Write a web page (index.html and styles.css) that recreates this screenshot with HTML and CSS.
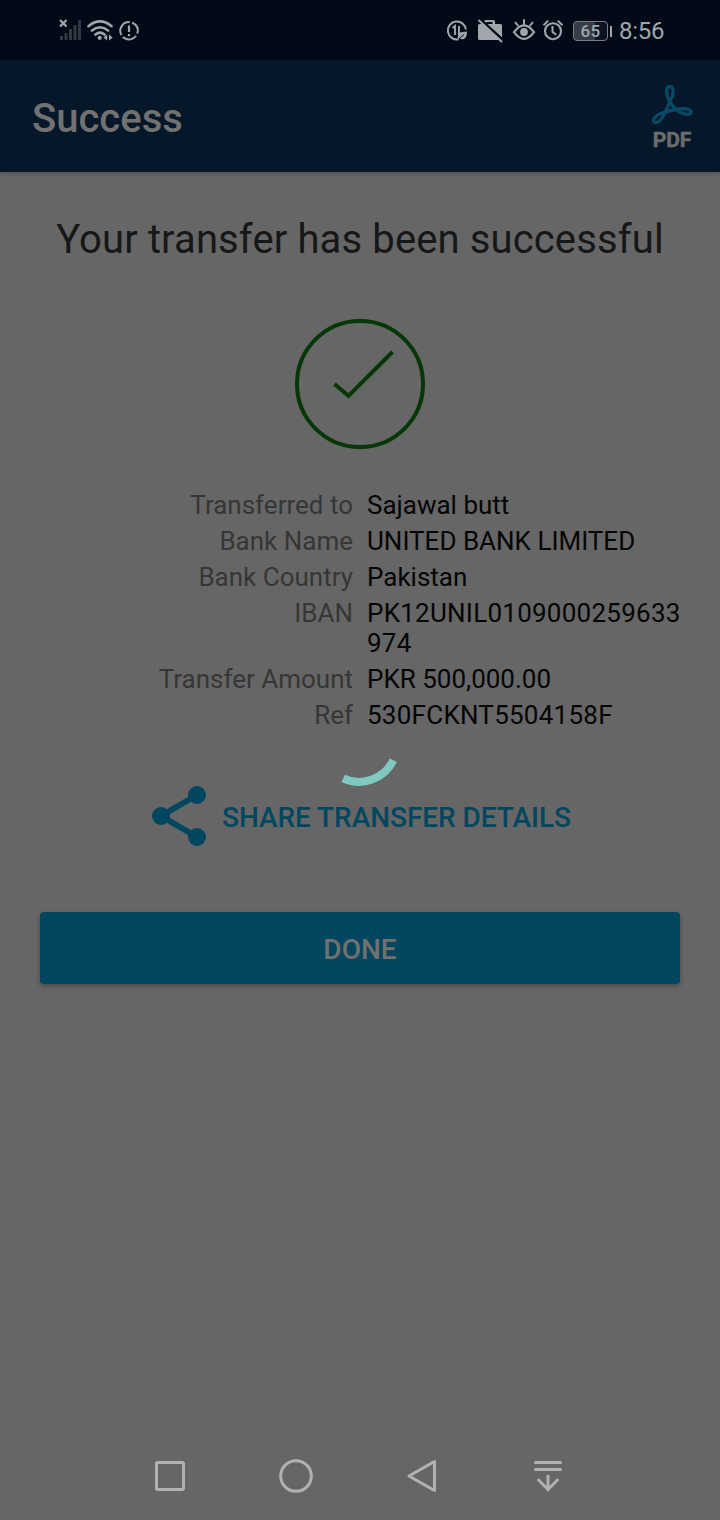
FILE: index.html
```html
<!DOCTYPE html>
<html lang="en">
<head>
<meta charset="utf-8">
<title>Success</title>
<link rel="stylesheet" href="styles.css">
</head>
<body>
<div class="status">
  <svg class="status-left" width="84" height="30" viewBox="56 16 84 30" fill="none" stroke="#a0a6ab">
    <path d="M60 20l6.500 6.500m0-6.500l-6.500 6.500" stroke-width="2.300"/>
    <path d="M61.500 36v4M66 33v7M70.500 29v11M75 25v15M79.500 20v20" stroke="#303943" stroke-width="3"/>
    <path d="M88.500 26.200q11.500-9.500 23 0M92 30.500q8-6.500 16 0M95.500 34.600q4.500-3.800 9 0" stroke-width="2.600" stroke-linecap="round"/>
    <circle cx="99.700" cy="37.800" r="2.100" fill="#a0a6ab" stroke="none"/>
    <path d="M103.500 37.500l3.700-3v6zM112.700 37.500l-3.700-3v6z" fill="#a0a6ab" stroke="none"/>
    <circle cx="129" cy="30.800" r="8.700" stroke-width="2" pathLength="360" stroke-dasharray="100 16 124 16 88 16" transform="rotate(35 129 30.800)"/>
    <path d="M129 25.500v6.500M129 34v2.200" stroke-width="2.200"/>
  </svg>
  <svg class="status-right" width="120" height="30" viewBox="446 16 120 30" fill="none" stroke="#a0a6ab">
    <path d="M465.800 29.500a9 9 0 1 0-7.300 9.800" stroke-width="2"/>
    <path d="M452.500 28l2.500-2v9M459 26v9l2.800-2.500" stroke-width="1.900"/>
    <path d="M458 39.800c-1-6 3-8 9-8.300c.3 6-3 9.500-8 7z" fill="#a0a6ab" stroke="none"/>
    <path d="M459 39l5-4.500" stroke="#020a17" stroke-width="1"/>
    <path d="M479.500 24H484v-2.500q0-1.500 1.500-1.500h8q1.500 0 1.500 1.500V24h5.500q1.500 0 1.500 1.500V40h-22.500q-1.500 0-1.500-1.500V25.500q0-1.500 1.500-1.500z" fill="#a0a6ab" stroke="none"/>
    <path d="M486.500 22h6v2h-6z" fill="#020a17" stroke="none"/>
    <path d="M480 19l24 22" stroke="#020a17" stroke-width="2.500"/>
    <path d="M478.500 20l23.500 22" stroke-width="2"/>
    <path d="M514 32.200q10-13.500 20 0q-10 13.500-20 0z" stroke-width="2.200"/>
    <circle cx="524" cy="32" r="3.900" fill="#a0a6ab" stroke="none"/>
    <path d="M524 20v4M515.500 22.500l2.300 3M532.500 22.500l-2.300 3" stroke-width="2" stroke-linecap="round"/>
    <circle cx="553" cy="31.200" r="8" stroke-width="2.100"/>
    <path d="M543.500 25.300l4.700-4.700M557.800 20.600l4.700 4.700M552.500 26v5.700l3.700 3" stroke-width="2"/>
  </svg>
  <div class="battery"><span>65</span></div>
  <div class="battery-tip"></div>
  <div class="time">8:56</div>
</div>
<header class="appbar">
  <h1>Success</h1>
  <div class="pdf">
    <svg width="42" height="42" viewBox="651 84 42 42" fill="none" stroke="#064a66" stroke-width="3.300" stroke-linejoin="round">
      <path d="M670 101C674.500 94 674 86.500 669.800 86.500C665.500 86.500 665.500 94 669.500 101C672 106 677 111 683 113.500C687 115 691 114.800 691 112C691 108.500 684 108 678 109C672 110 666 111.500 661 113.500C656 115.500 653 118.500 653.500 121C654 124 659 123 662 118C665 113 668 106 670 101Z"/>
    </svg>
    <span>PDF</span>
  </div>
</header>
<main class="content">
  <h2>Your transfer has been successful</h2>
  <svg class="check" width="130" height="130" viewBox="0 0 130 130" fill="none" stroke="#053806" stroke-width="4">
    <circle cx="65" cy="65" r="63"/>
    <path d="M39.500 65L53.500 76.800L97.500 33"/>
  </svg>
  <dl class="details">
    <dt>Transferred to</dt><dd>Sajawal butt</dd>
    <dt>Bank Name</dt><dd>UNITED BANK LIMITED</dd>
    <dt>Bank Country</dt><dd>Pakistan</dd>
    <dt>IBAN</dt><dd class="code">PK12UNIL0109000259633<br>974</dd>
    <dt>Transfer Amount</dt><dd>PKR 500,000.00</dd>
    <dt>Ref</dt><dd class="code">530FCKNT5504158F</dd>
  </dl>
  <div class="share">
    <svg width="54" height="60" viewBox="0 0 54 60" fill="#02465f">
      <path d="M45 9L9 30L45 51" fill="none" stroke="#02465f" stroke-width="6"/>
      <circle cx="45" cy="9" r="9"/><circle cx="9" cy="30" r="9"/><circle cx="45" cy="51" r="9"/>
    </svg>
    <span>SHARE TRANSFER DETAILS</span>
  </div>
  <button class="done">DONE</button>
</main>
<svg class="spinner" width="60" height="32" viewBox="340 756 60 32" fill="none" stroke="#7fc9c0" stroke-width="8">
  <path d="M343.200 778.300A38 38 0 0 0 393.300 760.300"/>
</svg>
<nav class="navbar">
  <svg width="32" height="36" viewBox="0 0 32 36"><rect x="2.500" y="4.500" width="27" height="27" rx="1.500"/></svg>
  <svg width="36" height="36" viewBox="0 0 36 36"><circle cx="18" cy="18" r="15.300"/></svg>
  <svg width="32" height="36" viewBox="0 0 32 36"><path d="M3 18L28.500 3.500v29z"/></svg>
  <svg width="30" height="36" viewBox="0 0 30 36"><path d="M2.500 4.500h25M2.500 11.500h25M15 18v14M5.500 22L15 31.500L24.500 22"/></svg>
</nav>
</body>
</html>
```
FILE: styles.css
```css
* { box-sizing: border-box; }
body {
  margin: 0;
  width: 720px;
  height: 1520px;
  display: flex;
  flex-direction: column;
  position: relative;
  overflow: hidden;
  background: #666;
  font-family: Roboto, "Liberation Sans", sans-serif;
}
svg { display: block; flex: none; }
.status {
  height: 60px;
  flex: none;
  display: flex;
  align-items: center;
  padding: 2px 0 0 56px;
  background: #020a17;
  color: #a0a6ab;
}
.status-right { margin-left: 306px; }
.battery {
  width: 35px;
  height: 20px;
  margin-left: 7px;
  border: 1.5px solid #777e85;
  border-radius: 4px;
  background: linear-gradient(90deg, #353c47 65%, #0b1420 65%);
  font-size: 17px;
  font-weight: 500;
  line-height: 18px;
  letter-spacing: .3px;
  text-align: center;
}
.battery-tip { width: 2px; height: 11px; margin-left: 2px; background: #a0a6ab; }
.time { margin-left: 7px; font-size: 24px; line-height: 28px; letter-spacing: -.3px; white-space: nowrap; }
.appbar {
  height: 112px;
  flex: none;
  display: flex;
  justify-content: space-between;
  padding: 24px 27px 0 32px;
  background: #061729;
  box-shadow: 0 1px 5px rgba(0, 0, 0, .25);
}
h1 { margin: 11px 0 0; font-size: 40px; line-height: 47px; font-weight: 500; color: #717171; }
.pdf { display: flex; flex-direction: column; align-items: center; color: #6c6c6c; }
.pdf span { margin-top: 2px; font-size: 21px; line-height: 24px; font-weight: 700; -webkit-text-stroke: .5px #6c6c6c; }
.content { flex: 1; display: flex; flex-direction: column; align-items: center; }
h2 { margin: 44px 0 0; font-size: 40px; line-height: 48px; font-weight: 400; letter-spacing: .12px; color: #171717; white-space: nowrap; }
.check { margin-top: 55px; }
.details {
  display: grid;
  grid-template-columns: 353px 1fr;
  column-gap: 14px;
  row-gap: 6px;
  width: 720px;
  margin: 41px 0 0;
  font-size: 26px;
  line-height: 30px;
}
dt { text-align: right; color: #363636; }
dd { margin: 0; color: #050505; white-space: nowrap; }
.code { letter-spacing: .25px; }
.share {
  display: flex;
  align-items: center;
  gap: 16px;
  align-self: flex-start;
  margin: 56px 0 0 152px;
  color: #02465f;
  font-size: 28px;
  line-height: 34px;
  font-weight: 500;
  letter-spacing: -.05px;
  white-space: nowrap;
}
.share span { padding-top: 4px; }
.done {
  width: 640px;
  height: 72px;
  margin-top: 66px;
  padding: 3px 0 0;
  border: 0;
  border-radius: 4px;
  background: #02465f;
  box-shadow: 0 2px 4px rgba(0, 0, 0, .3);
  color: #717171;
  font: 500 28px/34px Roboto, "Liberation Sans", sans-serif;
}
.spinner { position: absolute; left: 340px; top: 756px; }
.navbar { height: 62px; flex: none; display: flex; padding-left: 154px; }
.navbar svg { fill: none; stroke: #b1b1b1; stroke-width: 3; stroke-linecap: round; stroke-linejoin: round; }
.navbar svg:nth-child(2) { margin-left: 92px; }
.navbar svg:nth-child(3) { margin-left: 92px; }
.navbar svg:nth-child(4) { margin-left: 95px; }
```
